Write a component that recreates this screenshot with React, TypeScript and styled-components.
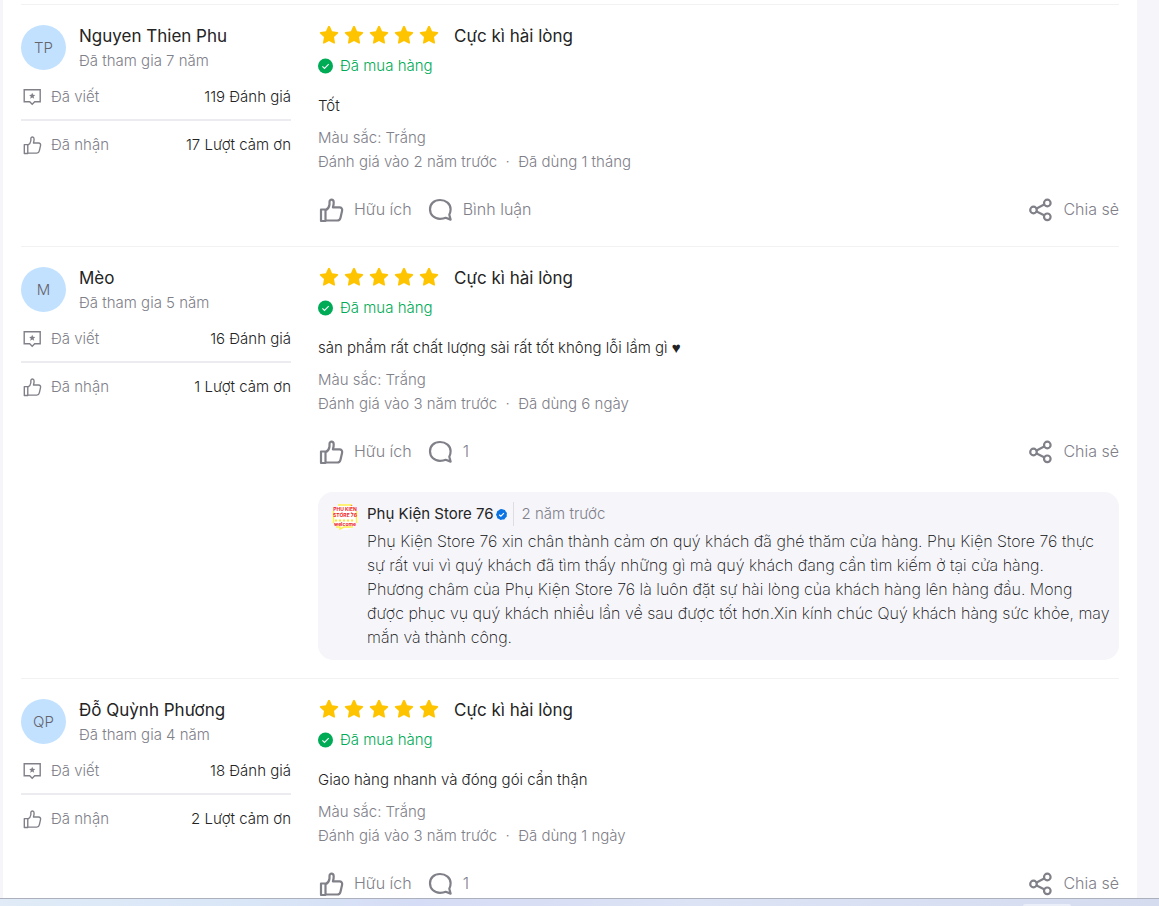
import React from "react";
import styled, { createGlobalStyle } from "styled-components";

const GlobalStyle = createGlobalStyle`
  *, *::before, *::after { box-sizing: border-box; }
  body {
    margin: 0;
    background: #f5f5fa;
    color: #242424;
    font-family: Inter, "Liberation Sans", sans-serif;
    font-size: 15px;
    font-weight: 300;
    line-height: 24px;
  }
  h3, p, ul, dl, dd { margin: 0; padding: 0; }
  button { font: inherit; border: 0; background: none; padding: 0; cursor: pointer; }
`;

const Screen = styled.div`
  height: 100vh;
  display: grid;
  grid-template-rows: minmax(0, 1fr) auto;
`;

const Viewport = styled.main`
  overflow: hidden;
  padding: 0 22px 0 3px;
`;

const Panel = styled.div`
  background: #fff;
  padding: 4px 18px 0;
  min-height: 100%;
`;

const Review = styled.article`
  display: grid;
  grid-template-columns: 270px minmax(0, 1fr);
  column-gap: 27px;
  border-top: 1px solid #f2f2f2;
  padding: 20px 0 18px;
`;

const Author = styled.header`
  display: flex;
  align-items: center;
  gap: 13px;
  height: 45px;
  margin-bottom: 15px;
`;

const AuthorText = styled.div`
  padding-top: 2px;
`;

const Avatar = styled.div`
  width: 45px;
  height: 45px;
  border-radius: 50%;
  background: #c2e1ff;
  color: #64646d;
  display: grid;
  place-items: center;
`;

const Name = styled.h3`
  font-size: 17px;
  font-weight: 400;
  line-height: 25px;
`;

const Muted = styled.p`
  color: #808089;
`;

const Stats = styled.dl`
  display: flex;
  flex-direction: column;
`;

const Stat = styled.div`
  display: flex;
  align-items: center;
  justify-content: space-between;
  &:not(:last-child) {
    padding-bottom: 10px;
    border-bottom: 2px solid #ebebf0;
    margin-bottom: 12px;
  }
  dt {
    display: flex;
    align-items: center;
    gap: 8px;
    color: #808089;
  }
  dt svg { width: 22px; height: 20px; }
`;

const Rating = styled.div`
  display: flex;
  align-items: center;
  height: 22px;
  margin-bottom: 7px;
`;

const Stars = styled.div`
  display: flex;
  gap: 5px;
  margin: 0 15px 2px 1px;
`;

const Purchased = styled.p`
  display: flex;
  align-items: center;
  gap: 7px;
  color: #00ab56;
`;

const Comment = styled.p`
  margin: 16px 0 8px;
`;

const Heart = styled.span`
  font-family: "Liberation Sans", sans-serif;
`;

const Actions = styled.div`
  display: flex;
  align-items: center;
  margin: 24px 0 6px;
`;

const Action = styled.button<{ $end?: boolean }>`
  display: flex;
  align-items: center;
  gap: 10px;
  height: 24px;
  margin-left: ${(p) => (p.$end ? "auto" : "0")};
  margin-right: ${(p) => (p.$end ? "0" : "16px")};
  color: #808089;
  font-size: 16px;
`;

const ActionLabel = styled.span`
  padding-bottom: 2px;
`;

const Reply = styled.section`
  display: grid;
  grid-template-columns: 26px minmax(0, 1fr);
  column-gap: 9px;
  margin-top: 28px;
  padding: 10px 8px 11px 14px;
  border-radius: 15px;
  background: #f5f5fa;
`;

const ReplyHead = styled.div`
  display: flex;
  align-items: center;
  margin-bottom: 3px;
`;

const Seller = styled.strong`
  font-weight: 400;
  margin-right: 2px;
`;

const ReplyDate = styled.time`
  margin-left: 6px;
  padding-left: 8px;
  border-left: 1px solid #dddde3;
  color: #808089;
`;

const ReplyText = styled.p`
  font-size: 16px;
  font-weight: 200;
  color: #0c0c0c;
  white-space: pre-line;
`;

const Taskbar = styled.footer`
  height: 8px;
  border-top: 1px solid #abb0bc;
  background: linear-gradient(90deg, #e0ebf7 0%, #d9e6f7 22%, #d5dcf5 36%, #dce3f5 60%, #d5dcf0 100%);
  display: flex;
  justify-content: flex-end;
  align-items: flex-end;
  padding-right: 88px;
`;

const TaskTab = styled.span`
  width: 48px;
  height: 2px;
  border-radius: 2px 2px 0 0;
  background: #eaeef9;
`;

const line = { fill: "none", stroke: "#808089", strokeLinejoin: "round", strokeLinecap: "round" } as const;

const Star = () => (
  <svg width="20" height="20" viewBox="0 0 20 20" fill="#ffc400" aria-hidden="true">
    <path d="M9.1 1.2Q10 .1 10.900 1.200L13.100 6.200L18.500 6.900Q19.800 7.300 18.900 8.400L15 12.100L16 17.600Q16.100 19 14.800 18.600L10 16L5.200 18.600Q3.900 19 4 17.600L5 12.100L1.100 8.400Q.2 7.300 1.500 6.900L6.900 6.200Z" />
  </svg>
);

const Thumb = ({ size, stroke }: { size: number; stroke: number }) => (
  <svg width={size} height={size} viewBox="0 0 26 26" {...line} strokeWidth={stroke} aria-hidden="true">
    <path d="M3 12.500H7.500V24H3ZM7.500 13.300C10.300 12 11.200 10 11.500 7.500V5C11.500 1.800 15.600 1.900 15.700 5.200C15.800 7.500 15.300 9 14.900 10.400H21.500C23.500 10.400 24.500 11.800 24.100 13.700L22.500 20.700C22.100 22.600 20.900 23.500 19.200 23.500H7.500" />
  </svg>
);

const WrittenIcon = () => (
  <svg viewBox="0 0 22 20" {...line} strokeWidth="1.4" aria-hidden="true">
    <path strokeLinejoin="miter" d="M3.200 2.700H19.200V14.800H13.700L11.200 17.300L8.700 14.800H3.200Z" />
    <path fill="#808089" stroke="none" d="M11.200 5.700L12.100 7.800L14.300 8L12.600 9.400L13.200 11.700L11.200 10.500L9.200 11.700L9.800 9.400L8.100 8L10.300 7.800Z" />
  </svg>
);

const Bubble = () => (
  <svg width="25" height="26" viewBox="0 0 25 26" {...line} strokeWidth="2.2" aria-hidden="true">
    <path d="M12 3C6 3 2 6.800 2 12.200S6 21.800 12 21.800C14.300 21.800 16.200 21.500 17.700 20.800L22.600 22.600L21.300 17.800C22.100 16.200 22.600 14.400 22.600 12.200C22.600 6.800 18 3 12 3Z" />
  </svg>
);

const Share = () => (
  <svg width="26" height="26" viewBox="0 0 26 26" {...line} strokeWidth="2.2" aria-hidden="true">
    <circle cx="6.500" cy="13" r="3.300" />
    <circle cx="20.300" cy="6" r="3.300" />
    <circle cx="20.300" cy="19.800" r="3.300" />
    <path d="M9.600 11.400L17.100 7.600M9.600 14.600L17.100 18.200" />
  </svg>
);

const Check = () => (
  <svg width="15" height="16" viewBox="0 0 15 16" aria-hidden="true">
    <circle cx="7.500" cy="8" r="7.500" fill="#00ab56" />
    <path d="M4.400 8.300L6.500 10.400L10.700 6.100" fill="none" stroke="#fff" strokeWidth="1.100" />
  </svg>
);

const Verified = () => (
  <svg width="11" height="11" viewBox="0 0 11 11" aria-hidden="true">
    <path fill="#0b74e5" d="M5.500 0L7.100.6L8.900.9L9.700 2.600L11 4L10.700 5.800L10.800 7.600L9.300 8.900L8.300 10.400L6.400 10.500L4.600 11L3 9.900L1.300 9.200L.9 7.400L0 5.700L.7 4L1.200 2.200L2.800 1.300L4.100.3Z" />
    <path d="M3.200 5.700L4.900 7.200L7.900 4.100" fill="none" stroke="#fff" strokeWidth="1.200" />
  </svg>
);

const ShopLogo = () => (
  <svg width="26" height="28" viewBox="0 0 26 28" aria-label="Phụ Kiện Store 76" fontFamily="Inter, sans-serif" fill="#ee1c25" textAnchor="middle">
    <circle cx="13" cy="15" r="13" fill="#fff" />
    <path d="M6 3H20M1.500 9V21M24.500 9V21M4 25H8V27L12 25H21" fill="none" stroke="#fff04a" strokeWidth="1.500" />
    <text x="13" y="9" fontSize="5" fontWeight="700">PHỤ KIỆN</text>
    <text x="13" y="15" fontSize="5" fontWeight="700">STORE 76</text>
    <path d="M3 18.500H23" stroke="#ffe32e" strokeWidth="2" strokeDasharray="2 2" />
    <text x="13" y="24" fontSize="5" fontWeight="700">welcome</text>
  </svg>
);

interface ReviewData {
  initials: string;
  name: string;
  years: number;
  written: number;
  thanks: number;
  text: string;
  loved?: boolean;
  reviewed: string;
  used: string;
  comments: string;
  reply?: string;
}

const reviews: ReviewData[] = [
  { initials: "TP", name: "Nguyen Thien Phu", years: 7, written: 119, thanks: 17, text: "Tốt", reviewed: "2 năm trước", used: "1 tháng", comments: "Bình luận" },
  {
    initials: "M", name: "Mèo", years: 5, written: 16, thanks: 1,
    text: "sản phẩm rất chất lượng sài rất tốt không lỗi lầm gì", loved: true,
    reviewed: "3 năm trước", used: "6 ngày", comments: "1",
    reply: "Phụ Kiện Store 76 xin chân thành cảm ơn quý khách đã ghé thăm cửa hàng. Phụ Kiện Store 76 thực sự rất vui vì quý khách đã tìm thấy những gì mà quý khách đang cần tìm kiếm ở tại cửa hàng.\nPhương châm của Phụ Kiện Store 76 là luôn đặt sự hài lòng của khách hàng lên hàng đầu. Mong được phục vụ quý khách nhiều lần về sau được tốt hơn.Xin kính chúc Quý khách hàng sức khỏe, may mắn và thành công.",
  },
  { initials: "QP", name: "Đỗ Quỳnh Phương", years: 4, written: 18, thanks: 2, text: "Giao hàng nhanh và đóng gói cẩn thận", reviewed: "3 năm trước", used: "1 ngày", comments: "1" },
];

const ReviewItem = ({ r }: { r: ReviewData }) => (
  <Review>
    <div>
      <Author>
        <Avatar>{r.initials}</Avatar>
        <AuthorText>
          <Name>{r.name}</Name>
          <Muted>Đã tham gia {r.years} năm</Muted>
        </AuthorText>
      </Author>
      <Stats>
        <Stat>
          <dt><WrittenIcon />Đã viết</dt>
          <dd>{r.written} Đánh giá</dd>
        </Stat>
        <Stat>
          <dt><Thumb size={20} stroke={1.8} />Đã nhận</dt>
          <dd>{r.thanks} Lượt cảm ơn</dd>
        </Stat>
      </Stats>
    </div>
    <div>
      <Rating>
        <Stars role="img" aria-label="5 sao">
          {[1, 2, 3, 4, 5].map((n) => <Star key={n} />)}
        </Stars>
        <Name>Cực kì hài lòng</Name>
      </Rating>
      <Purchased><Check />Đã mua hàng</Purchased>
      <Comment>{r.text}{r.loved && <Heart> ♥</Heart>}</Comment>
      <Muted>Màu sắc: Trắng</Muted>
      <Muted>Đánh giá vào {r.reviewed}&nbsp; · &nbsp;Đã dùng {r.used}</Muted>
      <Actions>
        <Action type="button"><Thumb size={26} stroke={2.2} /><ActionLabel>Hữu ích</ActionLabel></Action>
        <Action type="button"><Bubble /><ActionLabel>{r.comments}</ActionLabel></Action>
        <Action type="button" $end><Share /><ActionLabel>Chia sẻ</ActionLabel></Action>
      </Actions>
      {r.reply && (
        <Reply>
          <ShopLogo />
          <div>
            <ReplyHead>
              <Seller>Phụ Kiện Store 76</Seller>
              <Verified />
              <ReplyDate>2 năm trước</ReplyDate>
            </ReplyHead>
            <ReplyText>{r.reply}</ReplyText>
          </div>
        </Reply>
      )}
    </div>
  </Review>
);

export default function App() {
  return (
    <>
      <GlobalStyle />
      <Screen>
        <Viewport>
          <Panel>
            {reviews.map((r) => <ReviewItem key={r.name} r={r} />)}
          </Panel>
        </Viewport>
        <Taskbar><TaskTab /></Taskbar>
      </Screen>
    </>
  );
}
